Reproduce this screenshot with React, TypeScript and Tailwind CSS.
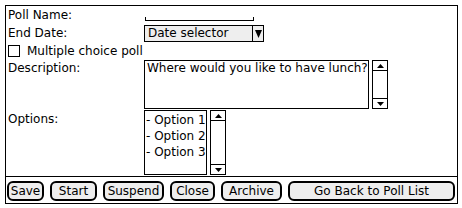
import React from 'react';

// small filled triangles used by the scrollbars and the dropdown
const Arrow: React.FC<{ dir: 'up' | 'down'; w?: number; h?: number }> = ({ dir, w = 7, h = 4 }) => (
  <svg width={w} height={h} viewBox={`0 0 ${w} ${h}`} className="block">
    {dir === 'up' ? (
      <path d={`M${w / 2} 0L${w} ${h}H0Z`} fill="#000" />
    ) : (
      <path d={`M0 0H${w}L${w / 2} ${h}Z`} fill="#000" />
    )}
  </svg>
);

const ScrollBar: React.FC<{ className: string }> = ({ className }) => (
  <div className={`flex flex-col border border-black bg-white ${className}`}>
    <div className="h-[10px] flex items-center justify-center border-b border-black">
      <Arrow dir="up" />
    </div>
    <div className="flex-1" />
    <div className="h-[10px] flex items-center justify-center border-t border-black">
      <Arrow dir="down" />
    </div>
  </div>
);

const SaltButton: React.FC<{ label: string; className: string }> = ({ label, className }) => (
  <div
    className={`h-[20px] flex items-center justify-center border-2 border-black rounded-[6px] bg-[#eeeeee] whitespace-nowrap ${className}`}
  >
    {label}
  </div>
);

export default function App() {
  const options = ['- Option 1', '- Option 2', '- Option 3'];

  return (
    <div className="w-[462px] h-[208px] bg-white pl-[5px] pt-[5px] text-black text-[12px] leading-[14px] font-['DejaVu_Sans',sans-serif]">
      <div className="w-[453px] h-[199px] border border-black flex flex-col">
        {/* Poll Name */}
        <div className="flex h-[18px]">
          <div className="w-[138px] pl-[2px] pt-[1.5px]">Poll Name:</div>
          <div className="ml-[1px] mt-[11px] w-[109px] h-[4px] border-x border-b border-black" />
        </div>

        {/* End Date */}
        <div className="flex h-[18px]">
          <div className="w-[138px] pl-[2px] pt-[2px]">End Date:</div>
          <div className="mt-[1px] h-[17px] w-[120px] border border-black bg-[#eeeeee] flex">
            <div className="flex-1 pl-[3px] leading-[15px]">Date selector</div>
            <div className="w-[11px] border-l border-black flex items-center justify-center">
              <Arrow dir="down" w={7} h={8} />
            </div>
          </div>
        </div>

        {/* Multiple choice */}
        <div className="flex h-[18px]">
          <div className="ml-[2px] mt-[3px] w-[12px] h-[12px] border-[1.5px] border-black" />
          <div className="ml-[7px] pt-[2px]">Multiple choice poll</div>
        </div>

        {/* Description */}
        <div className="flex h-[50px]">
          <div className="w-[138px] pl-[2px] pt-[1px]">Description:</div>
          <div className="w-[225px] h-[49px] border border-black pl-[2px] whitespace-nowrap">
            Where would you like to have lunch?
          </div>
          <ScrollBar className="ml-[3px] w-[16px] h-[49px]" />
        </div>

        {/* Options */}
        <div className="flex h-[66px]">
          <div className="w-[138px] pl-[2px] pt-[2px]">Options:</div>
          <div className="w-[63px] h-[65px] border border-black pl-[1px] pt-[1px] leading-[16px] whitespace-nowrap">
            {options.map(o => (
              <div key={o}>{o}</div>
            ))}
          </div>
          <ScrollBar className="ml-[3px] w-[16px] h-[65px]" />
        </div>

        {/* Actions */}
        <div className="flex-1 border-t border-black pt-[4px] pl-[1px] flex gap-[6px]">
          <SaltButton label="Save" className="w-[37px]" />
          <SaltButton label="Start" className="w-[47px]" />
          <SaltButton label="Suspend" className="w-[61px]" />
          <SaltButton label="Close" className="w-[45px]" />
          <SaltButton label="Archive" className="w-[61px]" />
          <SaltButton label="Go Back to Poll List" className="w-[167px]" />
        </div>
      </div>
    </div>
  );
}
